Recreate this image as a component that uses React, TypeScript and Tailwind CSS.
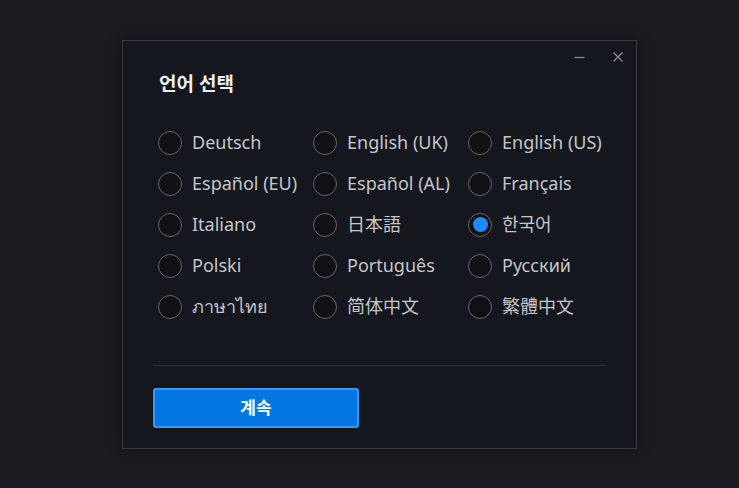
import { useState } from "react";

const languages = [
  "Deutsch",
  "English (UK)",
  "English (US)",
  "Español (EU)",
  "Español (AL)",
  "Français",
  "Italiano",
  "日本語",
  "한국어",
  "Polski",
  "Português",
  "Русский",
  "ภาษาไทย",
  "简体中文",
  "繁體中文",
];

function Radio({ label, checked, onSelect }: { label: string; checked: boolean; onSelect: () => void }) {
  return (
    <button onClick={onSelect} className="flex items-center gap-[10px] h-[41px] text-left">
      <span className="flex items-center justify-center w-[24px] h-[24px] rounded-full border-[1.5px] border-[#64676d] bg-[#0f1115]">
        {checked && <span className="w-[15px] h-[15px] rounded-full bg-[#1a8cff]" />}
      </span>
      <span className="text-[18px] text-[#c4c6c9] leading-none -mt-[1px]">{label}</span>
    </button>
  );
}

export default function App() {
  const [selected, setSelected] = useState("한국어");

  return (
    <div
      className="w-[739px] h-[488px] bg-[#1a1c22] pt-[40px] pl-[122px]"
      style={{ fontFamily: '"Noto Sans", "Noto Sans CJK KR", sans-serif' }}
    >
      <div className="w-[515px] h-[409px] bg-[#15171e] border border-[#393b40] shadow-[0_0_12px_rgba(0,0,0,0.5)] flex flex-col">
        <div className="flex justify-end items-center gap-[27px] h-[30px] pr-[12px] pt-[1px] text-[#8a8c90]">
          <svg width="11" height="12" viewBox="0 0 11 12">
            <line x1="0.5" y1="6.5" x2="10.5" y2="6.5" stroke="currentColor" strokeWidth="1.3" />
          </svg>
          <svg width="12" height="12" viewBox="0 0 12 12">
            <path d="M1.5 1.5 L10.5 10.5 M10.5 1.5 L1.5 10.5" stroke="currentColor" strokeWidth="1.3" />
          </svg>
        </div>
        <div className="px-[36px] pt-[4px]">
          <h1 className="text-[19px] font-bold text-[#eceef0] leading-none">언어 선택</h1>
        </div>
        <div className="grid grid-cols-[155px_155px_155px] pl-[35px] pt-[28px]">
          {languages.map((l) => (
            <Radio key={l} label={l} checked={selected === l} onSelect={() => setSelected(l)} />
          ))}
        </div>
        <div className="mx-[30px] mt-[38px] h-px bg-[#2e3034]" />
        <div className="px-[30px] pt-[22px]">
          <button className="w-[206px] h-[40px] rounded-[3px] bg-[#0077e2] border-2 border-[#3a98f2] text-white text-[17px] font-bold">
            계속
          </button>
        </div>
      </div>
    </div>
  );
}
